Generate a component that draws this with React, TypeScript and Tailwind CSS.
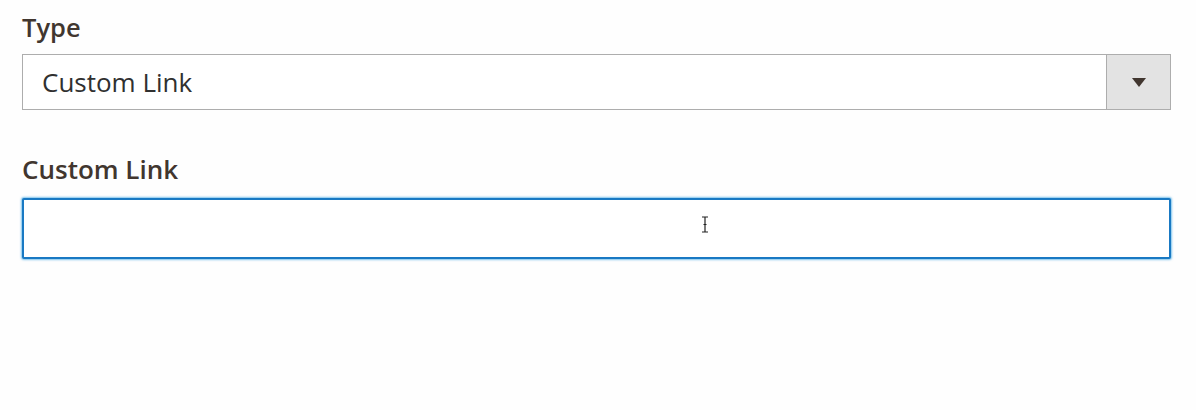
export default function App() {
  return (
    <div className="h-[410px] w-[1196px] bg-[#fefefe] px-[22px] pt-[10px] font-['Open_Sans',sans-serif] text-[#41362f]">
      <div className="flex flex-col">
        <label className="text-[25.5px] font-semibold leading-[34px]">Type</label>
        <div className="mt-[10px] flex h-[56px] w-[1149px] border border-[#adadad] bg-white">
          <div className="flex flex-1 items-center pl-[19px] text-[26px] text-[#303030]">Custom Link</div>
          <div className="flex w-[64px] items-center justify-center border-l border-[#adadad] bg-[#e3e3e3]">
            <svg width="14" height="9" viewBox="0 0 14 9">
              <path d="M0 0h14L7 9z" fill="#41362f" />
            </svg>
          </div>
        </div>

        <label className="mt-[42px] text-[26px] font-semibold leading-[34px]">Custom Link</label>
        <div className="relative mt-[12px] h-[61px] w-[1149px] rounded-[2px] border-2 border-[#1979c3] bg-white shadow-[0_0_2px_1px_rgba(0,139,219,0.5)]">
          <svg className="absolute left-[677px] top-[16px]" width="8" height="17" viewBox="0 0 8 17">
            <path d="M1 1h6M4 1v15M1 16h6M2.5 8.5h3" stroke="#222" strokeWidth="1.2" fill="none" />
          </svg>
        </div>
      </div>
    </div>
  )
}
